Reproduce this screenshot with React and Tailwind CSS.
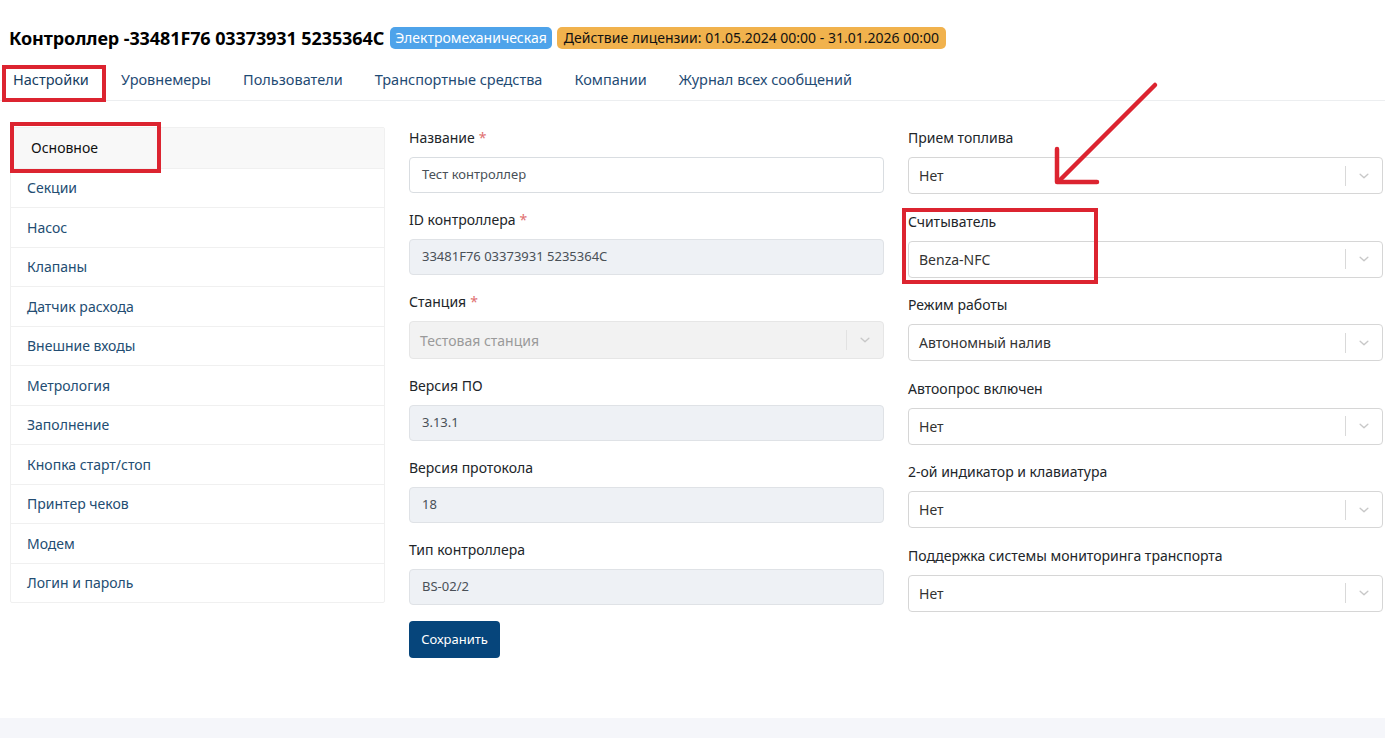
import React from "react";

const font = { fontFamily: '"Noto Sans", "Open Sans", sans-serif' };

function Chevron() {
  return (
    <svg width="14" height="14" viewBox="0 0 20 20" className="text-[#c8c8c8]">
      <path d="M4.5 7.5 L10 12.5 L15.5 7.5" fill="none" stroke="currentColor" strokeWidth="2" strokeLinecap="round" strokeLinejoin="round" />
    </svg>
  );
}

function Label({ children, req }) {
  return (
    <div className="h-[22px] leading-[22px] text-[14px] text-[#212529] mb-[8px]">
      {children}
      {req && <span className="text-[#e07070] ml-[4px]">*</span>}
    </div>
  );
}

function Input({ value, disabled }) {
  return (
    <div
      className={
        "h-[36px] rounded-[4px] border px-[12px] flex items-center text-[13px] " +
        (disabled ? "bg-[#eef1f5] border-[#dfe2e6] text-[#495057]" : "bg-white border-[#d9dde1] text-[#495057]")
      }
    >
      {value}
    </div>
  );
}

function Select({ value, disabled, h = "h-[37px]" }) {
  return (
    <div
      className={
        h +
        " rounded-[4px] border flex items-center " +
        (disabled ? "bg-[#f2f2f2] border-[#e6e6e6] text-[#9a9a9a]" : "bg-white border-[#d6d6d6] text-[#333]")
      }
    >
      <div className="flex-1 px-[10px] text-[14px]">{value}</div>
      <div className={"w-px h-[20px] " + (disabled ? "bg-[#e2e2e2]" : "bg-[#d9d9d9]")}></div>
      <div className="w-[36px] flex items-center justify-center">
        <Chevron />
      </div>
    </div>
  );
}

const sideItems = [
  "Основное",
  "Секции",
  "Насос",
  "Клапаны",
  "Датчик расхода",
  "Внешние входы",
  "Метрология",
  "Заполнение",
  "Кнопка старт/стоп",
  "Принтер чеков",
  "Модем",
  "Логин и пароль",
];

const tabs = ["Настройки", "Уровнемеры", "Пользователи", "Транспортные средства", "Компании", "Журнал всех сообщений"];

const rightFields = [
  ["Прием топлива", "Нет"],
  ["Считыватель", "Benza-NFC"],
  ["Режим работы", "Автономный налив"],
  ["Автоопрос включен", "Нет"],
  ["2-ой индикатор и клавиатура", "Нет"],
  ["Поддержка системы мониторинга транспорта", "Нет"],
];

export default function App() {
  return (
    <div style={font} className="relative w-[1385px] h-[738px] bg-white overflow-hidden flex flex-col">
      <div className="flex-1">
        {/* Title */}
        <div className="pt-[26px] pl-[9px] flex items-center h-[50px]">
          <h1 className="text-[18px] font-bold text-black tracking-[-0.1px] leading-[24px]">
            Контроллер -33481F76 03373931 5235364C
          </h1>
          <span className="ml-[6px] bg-[#4ea3ea] text-white text-[14px] leading-[22px] px-[5px] rounded-[5px]">
            Электромеханическая
          </span>
          <span className="ml-[5px] bg-[#f1b24d] text-[#111] text-[14px] leading-[22px] px-[7px] rounded-[5px]">
            Действие лицензии: 01.05.2024 00:00 - 31.01.2026 00:00
          </span>
        </div>

        {/* Tabs */}
        <div className="mt-[10px] h-[41px] border-b border-[#eceef0] flex items-center pl-[13px] gap-[32px] text-[14.5px] text-[#1f4b74]">
          {tabs.map((t, i) => (
            <div key={t} className={i === 0 ? "text-[#163d61]" : ""}>
              {t}
            </div>
          ))}
        </div>

        {/* Body */}
        <div className="mt-[26px] pl-[10px] flex gap-[24px]">
          {/* Sidebar */}
          <div className="w-[375px] shrink-0">
            <div className="border border-[#f0f0f0] rounded-[2px]">
              {sideItems.map((s, i) => (
                <div
                  key={s}
                  className={
                    "h-[39.5px] flex items-center text-[14px] " +
                    (i > 0 ? "border-t border-[#f0f0f0] " : "") +
                    (i === 0 ? "bg-[#f8f8f8] pl-[20px] text-[#111]" : "pl-[16px] text-[#234d72]")
                  }
                >
                  {s}
                </div>
              ))}
            </div>
          </div>

          {/* Middle column */}
          <div className="w-[475px] shrink-0">
            <Label req>Название</Label>
            <Input value="Тест контроллер" />
            <div className="h-[16px]"></div>
            <Label req>ID контроллера</Label>
            <Input value="33481F76 03373931 5235364C" disabled />
            <div className="h-[16px]"></div>
            <Label req>Станция</Label>
            <Select value="Тестовая станция" disabled h="h-[38px]" />
            <div className="h-[16px]"></div>
            <Label>Версия ПО</Label>
            <Input value="3.13.1" disabled />
            <div className="h-[16px]"></div>
            <Label>Версия протокола</Label>
            <Input value="18" disabled />
            <div className="h-[16px]"></div>
            <Label>Тип контроллера</Label>
            <Input value="BS-02/2" disabled />
            <div className="h-[16px]"></div>
            <button className="h-[37px] w-[91px] rounded-[4px] bg-[#06457b] text-white text-[13px]">Сохранить</button>
          </div>

          {/* Right column */}
          <div className="w-[475px] shrink-0">
            {rightFields.map(([l, v]) => (
              <div key={l} className="mb-[16.5px]">
                <Label>{l}</Label>
                <Select value={v} />
              </div>
            ))}
          </div>
        </div>
      </div>

      {/* Footer band */}
      <div className="h-[20px] bg-[#f5f6fa]"></div>

      {/* Red annotations */}
      <div className="absolute left-[2px] top-[65px] w-[104px] h-[37px] border-[4px] border-[#dc2430] pointer-events-none"></div>
      <div className="absolute left-[10px] top-[122px] w-[151px] h-[51px] border-[4px] border-[#dc2430] pointer-events-none"></div>
      <div className="absolute left-[902px] top-[208px] w-[196px] h-[76px] border-[4px] border-[#dc2430] pointer-events-none"></div>
      <svg className="absolute left-0 top-0 pointer-events-none" width="1385" height="738">
        <g stroke="#dc2430" strokeWidth="4.5" strokeLinecap="round" strokeLinejoin="round" fill="none">
          <line x1="1155" y1="85" x2="1059" y2="181" />
          <polyline points="1057,149 1057,182 1097,182" />
        </g>
      </svg>
    </div>
  );
}
